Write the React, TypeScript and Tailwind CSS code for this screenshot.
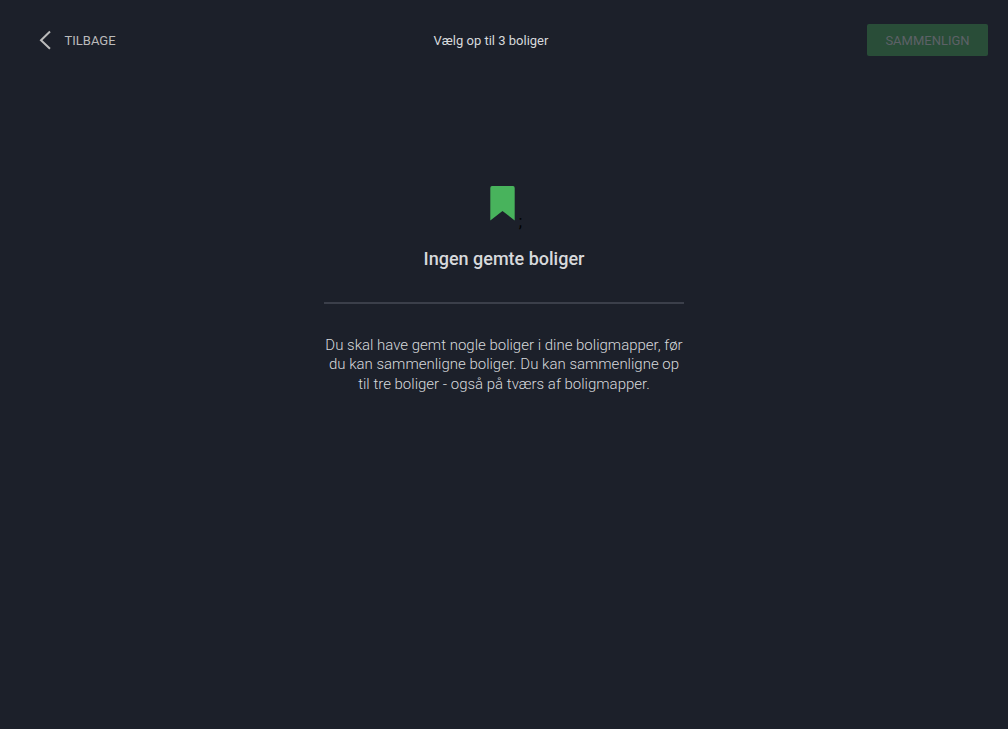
export default function App() {
  return (
    <div className="flex h-[729px] w-full flex-col bg-[#1c202a] font-['Roboto',sans-serif] text-[#d7d9dc]">
      <header className="grid h-20 grid-cols-[414px_154px_1fr] items-center pr-5">
        <button className="flex items-center pl-[39px] text-[13px] leading-4 text-[#bbbbbb]">
          <svg width="12" height="20" viewBox="0 0 12 20" fill="none" stroke="currentColor" strokeWidth="2">
            <path d="M11 1.500 2 10.250l9 8.500" />
          </svg>
          <span className="ml-[13.500px] pt-0.5">TILBAGE</span>
        </button>
        <h1 className="pt-0.5 text-center text-[13px] leading-4">Vælg op til 3 boliger</h1>
        <button disabled className="h-8 w-[121px] justify-self-end rounded-[2px] bg-[#294d38] pt-0.5 text-[13px] text-[#5d6167]">
          SAMMENLIGN
        </button>
      </header>
      <main className="mx-auto flex w-[360px] flex-col items-center pt-[106px] text-center">
        <div className="flex h-[44px] items-end pl-1">
          <svg className="self-start" width="25" height="35" viewBox="0 0 25 35" fill="#48b35c">
            <path d="M2 0H23Q24.700 0 24.700 2V34.500L12.500 25 .3 34.500V2Q.3 0 2 0Z" />
          </svg>
          <span className="ml-1 text-base leading-4 text-black">;</span>
        </div>
        <h2 className="mt-[17px] text-lg leading-[23px] font-medium">Ingen gemte boliger</h2>
        <hr className="mt-8 w-full border-t-2 border-[#3b3f4a]" />
        <p className="mt-[31.500px] w-full text-[15px] leading-[19.500px] font-light">
          Du skal have gemt nogle boliger i dine boligmapper, før du kan sammenligne boliger. Du kan sammenligne op til tre boliger - også på tværs af boligmapper.
        </p>
      </main>
    </div>
  );
}
